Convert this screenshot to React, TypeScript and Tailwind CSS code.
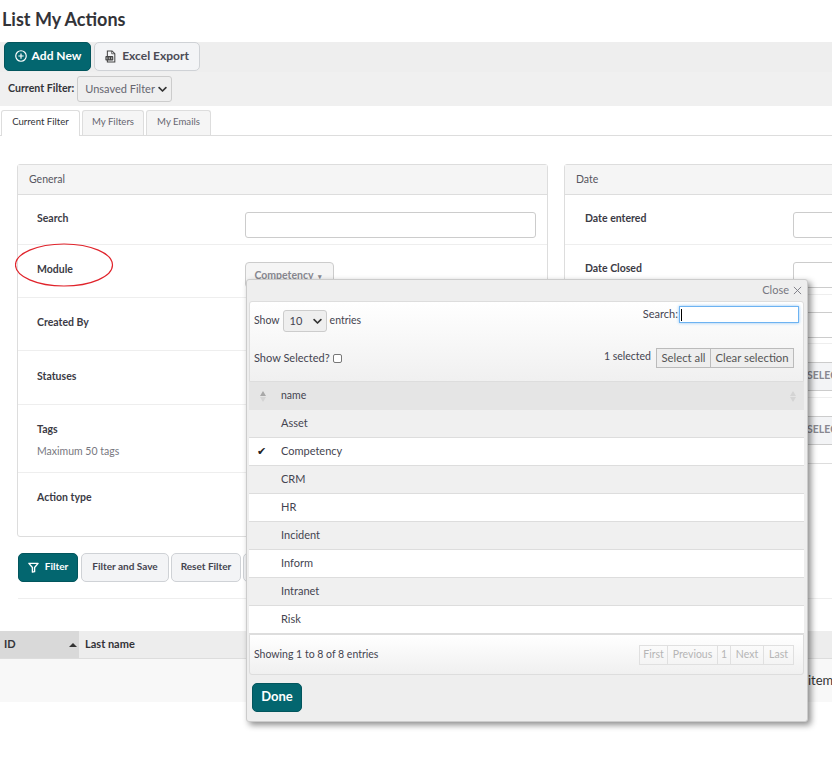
import React from "react";

const font = { fontFamily: '"Lato", "Liberation Sans", sans-serif' };

function Chevron({ className = "" }: { className?: string }) {
  return (
    <svg viewBox="0 0 12 8" className={className} fill="none" stroke="currentColor" strokeWidth="2.2" strokeLinecap="round" strokeLinejoin="round">
      <path d="M1.5 1.5 6 6l4.5-4.5" />
    </svg>
  );
}

function Row({
  h,
  label,
  sub,
  last,
  col = "w-[228px] pl-[20px]",
  lp = "pt-[17px]",
  children,
}: {
  h: string;
  label: string;
  sub?: string;
  last?: boolean;
  col?: string;
  lp?: string;
  children?: React.ReactNode;
}) {
  return (
    <div className={`flex ${h} ${last ? "" : "border-b border-[#eeeeee]"}`}>
      <div className={`${col} ${lp} shrink-0`}>
        <div className="text-[10.5px] leading-[14px] font-bold text-[#3b3b45]">{label}</div>
        {sub && <div className="text-[10.5px] leading-[14px] mt-2 text-[#777780]">{sub}</div>}
      </div>
      <div className="flex-1 pt-[17px]">{children}</div>
    </div>
  );
}

const items = ["Asset", "Competency", "CRM", "HR", "Incident", "Inform", "Intranet", "Risk"];
const left = "w-[227px] pl-[19px]";

export default function App() {
  return (
    <div className="relative w-[832px] h-[759px] overflow-hidden bg-white text-[#333]" style={font}>
      <h1 className="h-[42px] pl-[2px] pt-[8px] text-[18px] leading-[22px] font-bold text-[#333338]">List My Actions</h1>

      <div className="h-[30px] bg-[#eeeeee] flex gap-[3px] pl-[4px]">
        <button className="h-[29px] w-[87px] rounded-[5px] bg-[#03666f] border border-[#02555d] text-white text-[12px] font-bold flex items-center justify-center gap-[5px] pb-[2px] pl-[1px]">
          <svg viewBox="0 0 16 16" className="w-[12px] h-[12px] mt-[1px]" fill="none" stroke="currentColor" strokeWidth="1.6">
            <circle cx="8" cy="8" r="7" />
            <path d="M8 4.5v7M4.5 8h7" />
          </svg>
          Add New
        </button>
        <button className="h-[29px] w-[106px] rounded-[5px] bg-[#f3f4f6] border border-[#cfd2d6] text-[#4b4b55] text-[12px] font-bold flex items-center justify-center gap-[6px] pb-[2px]">
          <svg viewBox="0 0 14 16" className="w-[11px] h-[13px] mt-[1px]">
            <path d="M3 1h6l3.500 3.500V15H3z" fill="none" stroke="#444" strokeWidth="1.300" />
            <path d="M8.500 1v3.500H12.500" fill="none" stroke="#444" strokeWidth="1" />
            <rect x="0.500" y="7.500" width="10" height="5.500" rx="1" fill="#444" />
            <path d="M2.500 9v2.500M5.500 9v2.500M8.500 9v2.500" stroke="#ddd" strokeWidth="1" />
          </svg>
          Excel Export
        </button>
      </div>

      <div className="h-[34px] bg-[#f0f0f0] flex items-center pl-[8px] gap-[3px]">
        <span className="text-[10.6px] font-bold text-[#333338]">Current Filter:</span>
        <div className="h-[26px] w-[95px] rounded-[3px] border border-[#cccccc] bg-[#efefef] flex items-center justify-between pl-[7px] pr-[4px] text-[11px] text-[#666670]">
          Unsaved Filter
          <Chevron className="w-[9px] h-[7px] text-[#333]" />
        </div>
      </div>

      <div className="h-[30px] pt-[4px] pl-[1px] flex items-end gap-[2px] border-b border-[#dddddd]">
        <div className="h-[26px] -mb-px w-[79px] pb-[2px] bg-white border border-b-0 border-[#dddddd] rounded-t-[3px] flex items-center justify-center text-[9.6px] text-[#333338]">Current Filter</div>
        <div className="h-[25px] w-[62px] pb-[1px] bg-[#f5f5f5] border border-b-0 border-[#dddddd] rounded-t-[3px] flex items-center justify-center text-[9.6px] text-[#666670]">My Filters</div>
        <div className="h-[25px] w-[65px] pb-[1px] bg-[#f5f5f5] border border-b-0 border-[#dddddd] rounded-t-[3px] flex items-center justify-center text-[9.6px] text-[#666670]">My Emails</div>
      </div>

      <div className="flex gap-[16px] pl-[17px] pt-[28px] items-start">
        <div className="w-[531px] h-[373px] shrink-0 border border-[#dddddd] rounded-[3px]">
          <div className="h-[30px] bg-[#f5f5f5] border-b border-[#dddddd] flex items-center pl-[11px] text-[10.5px] text-[#555560]">General</div>
          <Row h="h-[50px]" label="Search" col={left} lp="pt-[16px]">
            <div className="w-[291px] h-[26px] border border-[#cccccc] rounded-[3px] bg-white" />
          </Row>
          <Row h="h-[53px]" label="Module" col={left}>
            <div className="w-[89px] h-[26px] pt-[2px] pr-[3px] border border-[#cccccc] rounded-[4px] bg-[#f5f5f5] flex items-center justify-center gap-1 text-[10.5px] font-bold text-[#888890]">
              Competency <span className="text-[7px]">▾</span>
            </div>
          </Row>
          <Row h="h-[53px]" label="Created By" col={left} />
          <Row h="h-[54px]" label="Statuses" col={left} lp="pt-[18px]" />
          <Row h="h-[68px]" label="Tags" sub="Maximum 50 tags" col={left} />
          <Row h="h-[63px]" label="Action type" col={left} last />
        </div>

        <div className="w-[531px] h-[300px] shrink-0 border border-[#dddddd] rounded-[3px]">
          <div className="h-[30px] bg-[#f5f5f5] border-b border-[#dddddd] flex items-center pl-[11px] text-[10.5px] text-[#555560]">Date</div>
          <Row h="h-[50px]" label="Date entered" lp="pt-[16px]">
            <div className="w-[291px] h-[26px] border border-[#cccccc] rounded-[3px] bg-white" />
          </Row>
          <Row h="h-[50px]" label="Date Closed" lp="pt-[16px]">
            <div className="w-[291px] h-[26px] border border-[#cccccc] rounded-[3px] bg-white" />
          </Row>
          <Row h="h-[49px]" label="">
            <div className="w-[291px] h-[26px] border border-[#cccccc] rounded-[3px] bg-white" />
          </Row>
          <Row h="h-[54px]" label="">
            <div className="mt-px w-[291px] h-[29px] border border-[#cccccc] bg-[#f3f4f6] text-[10.5px] font-bold text-[#888890] flex items-center pl-[13px] pb-[2px]">SELECT</div>
          </Row>
          <Row h="h-[64px]" label="" last>
            <div className="mt-px w-[291px] h-[29px] border border-[#cccccc] bg-[#f3f4f6] text-[10.5px] font-bold text-[#888890] flex items-center pl-[13px] pb-[2px]">SELECT</div>
          </Row>
        </div>
      </div>

      <div className="ml-[18px] mt-[16px] h-[46px] flex gap-[2px] items-start border-b border-[#eeeeee] w-[814px]">
        <button className="h-[29px] w-[60px] mr-px rounded-[5px] bg-[#03666f] border border-[#02555d] text-white text-[10px] font-bold flex items-center justify-center gap-[6px] pb-[2px]">
          <svg viewBox="0 0 12 12" className="w-[11px] h-[11px] mt-[2px]" fill="none" stroke="currentColor" strokeWidth="1.500" strokeLinejoin="round">
            <path d="M1 1.500h10L7.200 6v4.500L4.800 11V6z" />
          </svg>
          Filter
        </button>
        <button className="h-[29px] w-[88px] rounded-[5px] bg-[#f3f4f6] border border-[#cfd2d6] text-[#444450] text-[10px] font-bold pb-[2px]">Filter and Save</button>
        <button className="h-[29px] w-[70px] rounded-[5px] bg-[#f3f4f6] border border-[#cfd2d6] text-[#444450] text-[10px] font-bold pb-[2px]">Reset Filter</button>
        <button className="h-[29px] w-[40px] rounded-[5px] bg-[#f3f4f6] border border-[#cfd2d6]" />
      </div>

      <div className="mt-[32px] h-[28px] flex bg-[#ededed] border-b border-[#dddddd]">
        <div className="w-[79px] bg-[#d9d9d9] flex items-center justify-between pl-[4px] pr-[2px] text-[11px] font-bold text-[#333338]">
          ID
          <span className="w-0 h-0 border-x-[4px] border-x-transparent border-b-[4px] border-b-[#333]" />
        </div>
        <div className="pl-[6px] flex items-center text-[11px] font-bold text-[#333338]">Last name</div>
      </div>
      <div className="h-[43px] bg-[#f8f8f8] flex items-center pl-[808px] whitespace-nowrap text-[13px] text-[#333]">items</div>

      {/* Red annotation */}
      <svg className="absolute left-[15px] top-[243px] w-[100px] h-[45px]" viewBox="0 0 100 45" fill="none">
        <ellipse cx="49" cy="22" rx="48.500" ry="21" stroke="#e0232b" strokeWidth="1.200" />
      </svg>

      {/* Popup */}
      <div className="absolute left-[246px] top-[279px] w-[562px] h-[443px] bg-[#eeeeee] border border-[#cccccc] rounded-[3px] shadow-[3px_3px_6px_rgba(0,0,0,0.45)] px-[2px]">
        <div className="h-[21px] flex items-center justify-end gap-[4px] pr-[3px] text-[11px] text-[#777780]">
          Close
          <svg viewBox="0 0 10 10" className="w-[9px] h-[9px]" fill="none" stroke="currentColor" strokeWidth="1">
            <path d="M1 1l8 8M9 1l-8 8" />
          </svg>
        </div>
        <div className="h-[81px] w-[555px] border border-[#dddddd] rounded-t-[3px] bg-gradient-to-b from-white to-[#f0f0f0] flex flex-col px-[4px] text-[10.5px] text-[#444450]">
          <div className="h-[37px] flex items-center justify-between">
            <div className="flex items-center gap-[3px] pt-[1px]">
              Show
              <div className="w-[44px] h-[22px] rounded-[3px] border border-[#cccccc] bg-[#efefef] flex items-center justify-between pl-[6px] pr-[4px] text-[11px]">
                10 <Chevron className="w-[9px] h-[7px] text-[#333]" />
              </div>
              entries
            </div>
            <div className="self-start mt-[4px] flex items-center gap-[1px] text-[11px]">
              Search:
              <div className="w-[120px] h-[17px] bg-white border border-[#6db3f2] shadow-[0_0_3px_#8ec5f5] flex items-center pl-[1px]">
                <div className="w-px h-[12px] bg-black" />
              </div>
            </div>
          </div>
          <div className="flex-1 flex items-center justify-between pb-[4px]">
            <div className="flex items-center gap-[3px] text-[11px]">
              Show Selected?
              <span className="w-[9px] h-[9px] border border-[#777] rounded-[2px] bg-white" />
            </div>
            <div className="flex items-center pr-[5px]">
              <span className="mr-[5px] -mt-[2px]">1 selected</span>
              <span className="h-[20px] w-[55px] border border-[#bbbbbb] bg-[#eeeeee] flex items-center justify-center text-[#555] text-[11.3px]">Select all</span>
              <span className="h-[20px] w-[83px] border border-l-0 border-[#bbbbbb] bg-[#eeeeee] flex items-center justify-center text-[#555] text-[11.3px]">Clear selection</span>
            </div>
          </div>
        </div>
        <div className="w-[555px] h-[28px] bg-[#e5e5e5] flex items-center justify-between pr-[8px] text-[10.5px] text-[#444450]">
          <div className="flex items-center">
            <span className="w-[32px] pl-[11px] flex flex-col items-start gap-[1px]">
              <span className="w-0 h-0 border-x-[3px] border-x-transparent border-b-[5px] border-b-[#a8a8a8]" />
              <span className="w-0 h-0 border-x-[3px] border-x-transparent border-t-[5px] border-t-[#d4d4d4]" />
            </span>
            name
          </div>
          <span className="flex flex-col gap-[1px]">
            <span className="w-0 h-0 border-x-[3px] border-x-transparent border-b-[5px] border-b-[#d4d4d4]" />
            <span className="w-0 h-0 border-x-[3px] border-x-transparent border-t-[5px] border-t-[#d4d4d4]" />
          </span>
        </div>
        {items.map((it, i) => (
          <div key={it} className={`w-[555px] h-[28px] flex items-center border-b border-[#dddddd] text-[11px] text-[#444450] ${i % 2 ? "bg-white" : "bg-[#f0f0f0]"}`}>
            <span className="w-[32px] pl-[8px] text-[11px] text-[#222]">{it === "Competency" ? "✔" : ""}</span>
            {it}
          </div>
        ))}
        <div className="w-[555px] h-[41px] border border-[#dddddd] rounded-b-[3px] bg-gradient-to-b from-white to-[#f0f0f0] flex items-center justify-between pl-[4px] pr-[9px] text-[10.5px] text-[#444450]">
          Showing 1 to 8 of 8 entries
          <div className="flex h-[20px] border border-[#e0e0e0] text-[#b5b5b5]">
            <span className="w-[28px] flex items-center justify-center border-r border-[#e0e0e0]">First</span>
            <span className="w-[50px] flex items-center justify-center border-r border-[#e0e0e0]">Previous</span>
            <span className="w-[13px] flex items-center justify-center border-r border-[#e0e0e0]">1</span>
            <span className="w-[33px] flex items-center justify-center border-r border-[#e0e0e0]">Next</span>
            <span className="w-[29px] flex items-center justify-center">Last</span>
          </div>
        </div>
        <button className="mt-[8px] ml-[3px] w-[50px] h-[29px] rounded-[5px] bg-[#03666f] border border-[#02555d] text-white text-[13px] font-bold pb-[2px]">Done</button>
      </div>
    </div>
  );
}
